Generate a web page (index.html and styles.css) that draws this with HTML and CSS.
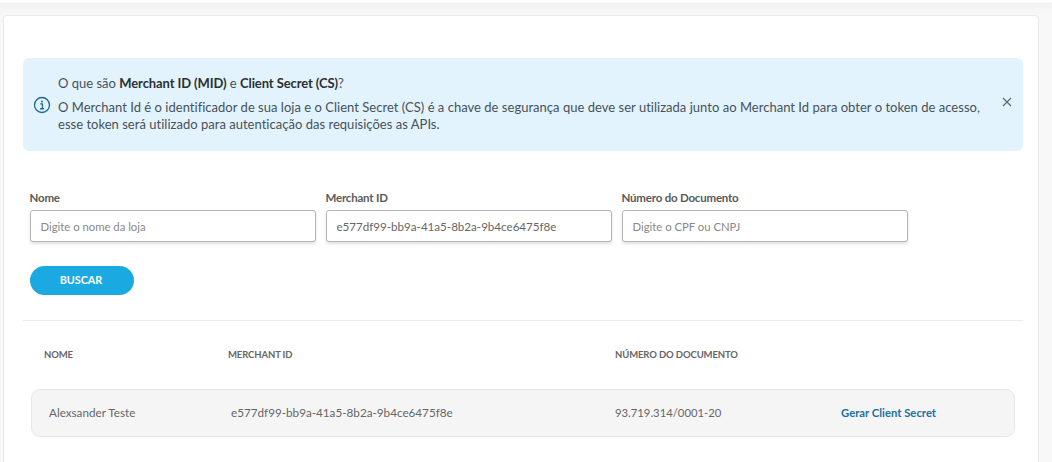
FILE: index.html
```html
<!DOCTYPE html>
<html lang="pt-BR">
<head>
<meta charset="utf-8">
<title>Merchant ID</title>
<link rel="stylesheet" href="styles.css">
</head>
<body>
<main class="card">
  <div class="alert">
    <svg class="alert-icon" viewBox="0 0 24 24" width="18" height="18" aria-hidden="true">
      <circle cx="12" cy="12" r="10" fill="none" stroke="#1a6b91" stroke-width="1.8"/>
      <path d="M9.6 10.4h3v6.4M9.4 17h5.4" fill="none" stroke="#1a6b91" stroke-width="1.7"/>
      <circle cx="11.9" cy="7.3" r="1.3" fill="#1a6b91"/>
    </svg>
    <div class="alert-text">
      <p class="alert-title">O que são <b>Merchant ID (MID)</b> e <b>Client Secret (CS)</b>?</p>
      <p class="alert-body">O Merchant Id é o identificador de sua loja e o Client Secret (CS) é a chave de segurança que deve ser utilizada junto ao Merchant Id para obter o token de acesso, esse token será utilizado para autenticação das requisições as APIs.</p>
    </div>
    <svg class="alert-close" viewBox="0 0 10 10" width="10" height="10" aria-hidden="true">
      <path d="M1 1l8 8M9 1l-8 8" stroke="#5b6b75" stroke-width="1.2" fill="none"/>
    </svg>
  </div>
  <form class="filters">
    <label class="field"><span class="field-label">Nome</span><input class="field-input" placeholder="Digite o nome da loja"></label>
    <label class="field"><span class="field-label">Merchant ID</span><input class="field-input" value="e577df99-bb9a-41a5-8b2a-9b4ce6475f8e"></label>
    <label class="field"><span class="field-label">Número do Documento</span><input class="field-input" placeholder="Digite o CPF ou CNPJ"></label>
  </form>
  <button class="search" type="button">BUSCAR</button>
  <hr class="divider">
  <div class="table-head">
    <span class="col-name">NOME</span>
    <span class="col-mid">MERCHANT ID</span>
    <span class="col-doc">NÚMERO DO DOCUMENTO</span>
  </div>
  <div class="table-row">
    <span class="col-name">Alexsander Teste</span>
    <span class="col-mid">e577df99-bb9a-41a5-8b2a-9b4ce6475f8e</span>
    <span class="col-doc">93.719.314/0001-20</span>
    <a class="row-action" href="#">Gerar Client Secret</a>
  </div>
</main>
</body>
</html>
```
FILE: styles.css
```css
* { box-sizing: border-box; }
html, body { height: 100%; }
body {
  margin: 0;
  padding: 15px 13px 0 3px;
  height: 462px;
  overflow: hidden;
  background: linear-gradient(#fff 0, #fff 2px, #f3f3f3 3px, #f8f8f8 15px);
  font-family: "Lato", "Open Sans", sans-serif;
  color: #555;
}
.card {
  height: 447px;
  padding: 42px 16px 0 20px;
  background: #fff;
  border: 1px solid #e9e9e9;
  border-bottom: 0;
  border-radius: 4px 4px 0 0;
}
.alert {
  display: flex;
  align-items: center;
  height: 93px;
  padding: 0 11px 0 10px;
  background: #e3f3fd;
  border-radius: 6px;
  margin-left: -1px;
  width: 1000px;
}
.alert-icon { flex: none; margin: 0 7px 0 0; }
.alert-text { flex: 1; margin-top: -2px; }
.alert-title, .alert-body { margin: 0; font-size: 13px; line-height: 17px; color: #45525a; }
.alert-body { letter-spacing: .02px; }
.alert-title { margin-bottom: 7px; }
.alert-title b { font-weight: 700; color: #2b2f33; letter-spacing: -.1px; }
.alert-close { flex: none; margin-left: 18px; margin-bottom: 6px; }
.filters { display: flex; gap: 10px; margin: 39px 0 0 6px; }
.field { display: flex; flex-direction: column; width: 286px; }
.field-label { font-size: 11.5px; font-weight: 700; line-height: 16px; letter-spacing: -.2px; color: #5a5a5a; margin-bottom: 4px; margin-left: -.5px; }
.field-input {
  height: 32px;
  padding: 0 9.5px;
  font: 11.6px "Lato", "Open Sans", sans-serif;
  color: #666;
  background: #fff;
  border: 1px solid #b5b5b5;
  border-radius: 3px;
  box-shadow: 0 2px 3px rgba(0, 0, 0, .12);
  outline: 0;
}
.field-input::placeholder { color: #888; opacity: 1; font-size: 11.3px; }
.search {
  display: block;
  width: 104px;
  height: 29px;
  margin: 24px 0 0 6px;
  padding: 0 2px 2px 0;
  border: 0;
  border-radius: 15px;
  background: #1aa9e0;
  color: #fff;
  font: 700 10.8px "Lato", "Open Sans", sans-serif;
}
.divider { margin: 25px 0 0 -1px; width: 1000px; border: 0; border-top: 1px solid #ececec; }
.table-head, .table-row { display: flex; align-items: center; }
.table-head { height: 20px; margin: 23px 0 0 20px; font-weight: 700; font-size: 9.5px; color: #666; letter-spacing: -.12px; }
.table-head .col-name { width: 184px; }
.table-head .col-mid { width: 387px; }
.table-row {
  height: 48px;
  width: 984px;
  margin: 25px 0 0 7px;
  padding: 0 0 2px 17px;
  background: #f5f5f5;
  border: 1px solid #e8e8e8;
  border-radius: 9px;
  color: #666;
  font-size: 11.7px;
}
.table-row .col-name { width: 182px; }
.table-row .col-mid { width: 384px; }
.table-row .col-doc { width: 226px; font-size: 11.3px; }
.row-action { color: #1a70a0; font-weight: 700; text-decoration: none; font-size: 11.3px; }
```
